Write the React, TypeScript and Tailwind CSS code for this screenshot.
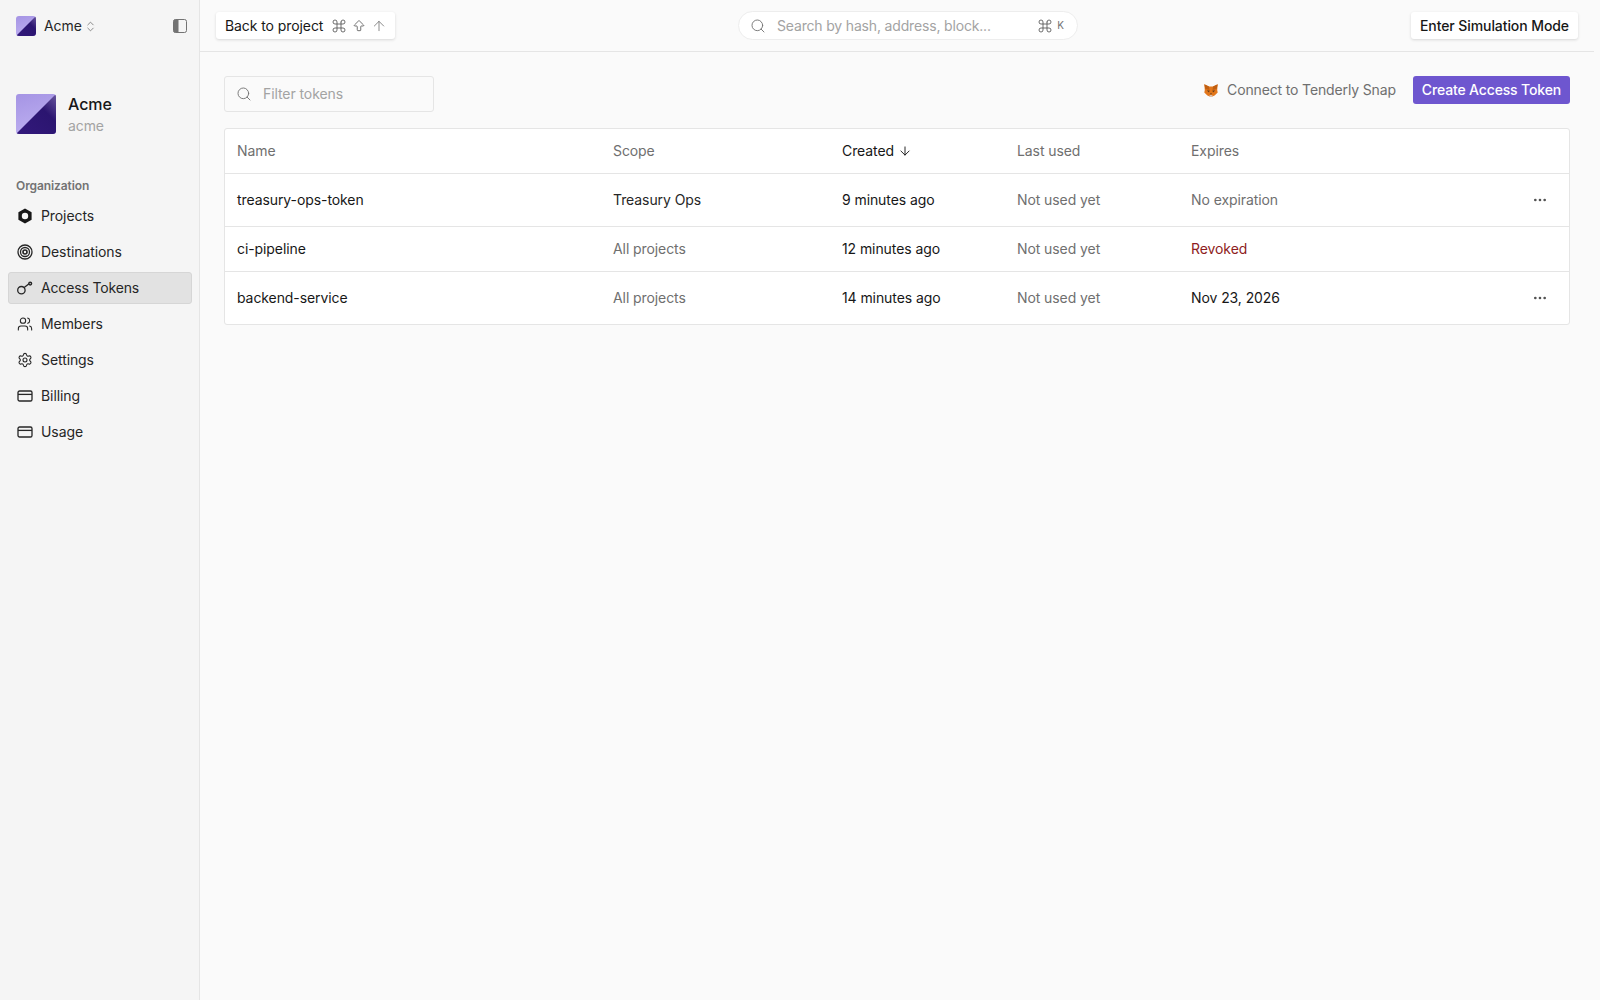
import { ArrowBigUp, ArrowDown, ArrowUp, ChevronsUpDown, Command, Ellipsis, Search, Settings, Users } from "lucide-react";
import type { ReactNode } from "react";

function AcmeLogo({ size, id }: { size: number; id: string }) {
	return (
		<svg width={size} height={size} viewBox="0 0 40 40" className="shrink-0 rounded-[3px]">
			<defs>
				<linearGradient id={`${id}-a`} x1="0" y1="0" x2="0.3" y2="1">
					<stop offset="0" stopColor="#a594e4" />
					<stop offset="1" stopColor="#bcaef0" />
				</linearGradient>
				<linearGradient id={`${id}-b`} x1="0" y1="1" x2="1" y2="0">
					<stop offset="0" stopColor="#33197c" />
					<stop offset="0.65" stopColor="#2b1570" />
					<stop offset="1" stopColor="#6a579f" />
				</linearGradient>
			</defs>
			<rect width="40" height="40" fill={`url(#${id}-a)`} />
			<polygon points="40,0 40,40 0,40" fill={`url(#${id}-b)`} />
		</svg>
	);
}

function HexIcon() {
	return (
		<svg width="16" height="16" viewBox="0 0 16 16">
			<path
				fillRule="evenodd"
				d="M8 .6 14.6 4.3v7.4L8 15.4 1.4 11.7V4.3L8 .6Zm0 4.2a3.2 3.2 0 1 0 0 6.4 3.2 3.2 0 0 0 0-6.4Z"
				fill="#171717"
			/>
		</svg>
	);
}

function TargetIcon() {
	return (
		<svg width="16" height="16" viewBox="0 0 16 16" fill="none" stroke="#262626">
			<circle cx="8" cy="8" r="7" strokeWidth="1.3" />
			<circle cx="8" cy="8" r="4.5" strokeWidth="1.3" />
			<circle cx="8" cy="8" r="2" strokeWidth="1.6" />
		</svg>
	);
}

function KeyIcon() {
	return (
		<svg width="16" height="16" viewBox="0 0 16 16" fill="none" stroke="#262626" strokeWidth="1.3">
			<circle cx="4.4" cy="10.2" r="3.7" />
			<path d="M7.2 7.6 12 3.8" />
			<circle cx="13.2" cy="3.6" r="1.4" strokeWidth="1.4" />
		</svg>
	);
}

function CardIcon() {
	return (
		<svg width="16" height="16" viewBox="0 0 16 16" fill="none" stroke="#262626" strokeWidth="1.3">
			<rect x="1" y="3" width="14" height="10" rx="1.6" />
			<path d="M1 6.4h14" />
		</svg>
	);
}

function PanelIcon() {
	return (
		<svg width="14" height="14" viewBox="0 0 14 14">
			<rect x="0.5" y="0.5" width="13" height="13" rx="2" fill="#f5f5f5" stroke="#737373" />
			<path d="M2 0.5h3.5v13H2a1.5 1.5 0 0 1-1.5-1.5V2A1.5 1.5 0 0 1 2 .5Z" fill="#737373" />
		</svg>
	);
}

function FoxIcon() {
	return (
		<svg width="14" height="13" viewBox="0 0 14 13">
			<polygon points="0.3,0.2 5,2.6 9,2.6 13.7,0.2 13.2,6 13.7,8.4 10.6,11.6 8.4,12.6 5.6,12.6 3.4,11.6 0.3,8.4 0.8,6" fill="#e2761b" />
			<polygon points="0.3,0.2 5,2.6 5.4,6 1.4,5" fill="#c05f12" />
			<polygon points="13.7,0.2 9,2.6 8.6,6 12.6,5" fill="#c05f12" />
			<polygon points="2.8,6.4 5.6,6.6 5,8.6" fill="#5c3a1a" />
			<polygon points="11.2,6.4 8.4,6.6 9,8.6" fill="#5c3a1a" />
			<polygon points="5.6,11 8.4,11 8.4,12.6 5.6,12.6" fill="#d7c1b3" />
			<polygon points="6,9.4 8,9.4 7,10.6" fill="#2a2a2a" />
		</svg>
	);
}

const navItems: { label: string; icon: ReactNode; active?: boolean }[] = [
	{ label: "Projects", icon: <HexIcon /> },
	{ label: "Destinations", icon: <TargetIcon /> },
	{ label: "Access Tokens", icon: <KeyIcon />, active: true },
	{ label: "Members", icon: <Users size={16} strokeWidth={1.6} color="#262626" /> },
	{ label: "Settings", icon: <Settings size={16} strokeWidth={1.6} color="#262626" /> },
	{ label: "Billing", icon: <CardIcon /> },
	{ label: "Usage", icon: <CardIcon /> },
];

const rows = [
	{ name: "treasury-ops-token", scope: "Treasury Ops", scopeDark: true, created: "9 minutes ago", expires: "No expiration", expiresClass: "text-[#6f6f6f]", menu: true, height: "h-[53px]" },
	{ name: "ci-pipeline", scope: "All projects", scopeDark: false, created: "12 minutes ago", expires: "Revoked", expiresClass: "text-[#8e1d22]", menu: false, height: "h-[45px]" },
	{ name: "backend-service", scope: "All projects", scopeDark: false, created: "14 minutes ago", expires: "Nov 23, 2026", expiresClass: "text-[#171717]", menu: true, height: "h-[53px]" },
];

function Sidebar() {
	return (
		<aside className="flex w-[200px] shrink-0 flex-col border-r border-[#e5e5e5] bg-[#f5f5f5]">
			<div className="flex h-[52px] items-center pr-[12px] pl-4">
				<AcmeLogo size={20} id="small" />
				<span className="ml-2 text-[#262626]">Acme</span>
				<ChevronsUpDown size={13} strokeWidth={1.5} className="ml-[2px] text-[#737373]" />
				<span className="ml-auto">
					<PanelIcon />
				</span>
			</div>
			<div className="mt-[42px] flex items-start gap-3 pl-4">
				<AcmeLogo size={40} id="large" />
				<div className="flex flex-col">
					<span className="text-base leading-5 font-medium text-[#171717]">Acme</span>
					<span className="mt-[2px] leading-5 text-[#a3a3a3]">acme</span>
				</div>
			</div>
			<div className="mt-[42px] pl-4 text-xs leading-4 font-semibold text-[#737373]">Organization</div>
			<nav className="mt-[6px] flex flex-col gap-1 pr-[7px] pl-2">
				{navItems.map((item) => (
					<div
						key={item.label}
						className={`flex h-8 items-center gap-2 rounded-[3px] border px-2 text-[#262626] ${item.active ? "border-[#d6d6d6] bg-[#e2e2e2] tracking-[-0.16px]" : "border-transparent"}`}
					>
						{item.icon}
						{item.label}
					</div>
				))}
			</nav>
		</aside>
	);
}

function Header() {
	return (
		<header className="flex h-[52px] shrink-0 items-center border-b border-[#e5e5e5] px-4">
			<button className="flex h-[27px] w-[179px] items-center rounded-[3px] bg-white pl-[9px] text-[#171717] shadow-[0_1px_3px_rgba(0,0,0,0.14)]">
				Back to project
				<Command size={16} strokeWidth={1.25} className="ml-2 text-[#525252]" />
				<ArrowBigUp size={14} strokeWidth={1.4} className="ml-[5px] text-[#525252]" />
				<ArrowUp size={16} strokeWidth={1.25} className="ml-[5px] text-[#737373]" />
			</button>
			<div className="ml-[343px] flex h-[29px] w-[340px] items-center rounded-full border border-[#ededed] bg-white pr-[13px] pl-[11px]">
				<Search size={16} strokeWidth={1.4} className="text-[#737373]" />
				<span className="ml-[11px] tracking-[-0.012em] text-[#a3a3a3]">Search by hash, address, block...</span>
				<Command size={16} strokeWidth={1.25} className="ml-auto text-[#525252]" />
				<span className="ml-[4px] text-[10px] text-[#737373]">K</span>
			</div>
			<button className="ml-auto flex h-[27px] items-center rounded-[3px] bg-white px-[9px] font-medium text-[#171717] shadow-[0_1px_3px_rgba(0,0,0,0.14)]">
				Enter Simulation Mode
			</button>
		</header>
	);
}

function TokensTable() {
	const th = "px-3 text-left font-normal text-[#6f6f6f]";
	return (
		<div className="mt-4 overflow-hidden rounded-[3px] border border-[#e5e5e5] bg-white">
			<table className="w-full table-fixed">
				<colgroup>
					<col className="w-[376px]" />
					<col className="w-[229px]" />
					<col className="w-[175px]" />
					<col className="w-[174px]" />
					<col />
				</colgroup>
				<thead>
					<tr className="h-[44px] border-b border-[#e5e5e5]">
						<th className={th}>Name</th>
						<th className={th}>Scope</th>
						<th className="px-3 text-left font-normal text-[#171717]">
							<span className="flex items-center gap-1">
								Created
								<ArrowDown size={14} strokeWidth={1.6} />
							</span>
						</th>
						<th className={th}>Last used</th>
						<th className={th}>Expires</th>
					</tr>
				</thead>
				<tbody>
					{rows.map((row, i) => (
						<tr key={row.name} className={`${row.height} ${i < rows.length - 1 ? "border-b border-[#e5e5e5]" : ""}`}>
							<td className="px-3 text-[#171717]">{row.name}</td>
							<td className={`px-3 ${row.scopeDark ? "text-[#262626]" : "text-[#6f6f6f]"}`}>{row.scope}</td>
							<td className="px-3 text-[#171717]">{row.created}</td>
							<td className="px-3 text-[#6f6f6f]">Not used yet</td>
							<td className="px-3">
								<div className="flex items-center justify-between">
									<span className={row.expiresClass}>{row.expires}</span>
									{row.menu && <Ellipsis size={16} strokeWidth={2} className="mr-[9px] text-[#525252]" />}
								</div>
							</td>
						</tr>
					))}
				</tbody>
			</table>
		</div>
	);
}

export default function App() {
	return (
		<div className="flex h-screen bg-[#fafafa] font-['Inter',sans-serif] text-sm tracking-[-0.006em]">
			<Sidebar />
			<div className="flex w-[1394px] flex-col">
				<Header />
				<main className="px-6 pt-6">
					<div className="flex items-start">
						<div className="flex h-9 w-[210px] items-center rounded-[3px] border border-[#e5e5e5] pl-[11px] text-[#a3a3a3]">
							<Search size={16} strokeWidth={1.4} className="text-[#737373]" />
							<span className="ml-[11px]">Filter tokens</span>
						</div>
						<div className="ml-auto flex h-7 items-center">
							<FoxIcon />
							<span className="ml-[9px] tracking-[-0.01em] text-[#6f6f6f]">Connect to Tenderly Snap</span>
							<button className="ml-[17px] flex h-7 items-center rounded-[3px] bg-[#6e56cf] px-[9px] font-medium tracking-[-0.15px] text-white">
								Create Access Token
							</button>
						</div>
					</div>
					<TokensTable />
				</main>
			</div>
		</div>
	);
}
